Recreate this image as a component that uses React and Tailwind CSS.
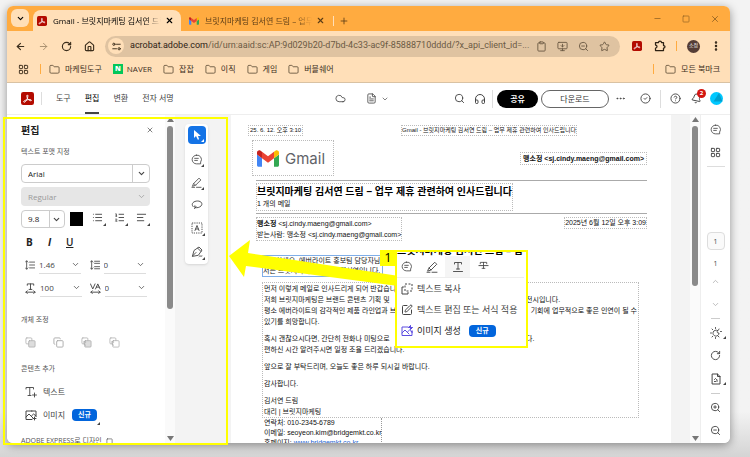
import {
  ArrowLeft, ArrowRight, Bell, ChevronDown, ChevronUp, CircleCheck, CircleHelp,
  Clipboard, Cloud, Copy, Ellipsis, EllipsisVertical, FileText, Folder,
  Headphones, House, LayoutGrid, List, ListOrdered, Minus, MonitorDown, Plus,
  RotateCw, Search, Square, SquarePen, Star, TextAlignStart, X,
  ZoomIn, ZoomOut
} from 'lucide-react'

const folders = ['잡잡', '이직', '게임', '버블쉐어']
const menus = ['도구', '편집', '변환', '전자 서명']

const Svg = ({ size = 12, sw = 1.5, className = '', children }) => (
  <svg
    width={size} height={size} viewBox="0 0 24 24" fill="none" stroke="currentColor"
    strokeWidth={sw} strokeLinecap="round" strokeLinejoin="round"
    className={`shrink-0 ${className}`} aria-hidden="true"
  >
    {children}
  </svg>
)

const AcrobatLogo = ({ size }) => (
  <svg width={size} height={size} viewBox="0 0 24 24" className="shrink-0" aria-hidden="true">
    <rect width="24" height="24" rx="4" fill="#b30b00" />
    <path
      d="M5.200 18.600c-1.400-1.200 1.500-3.300 6-4.200 4-.8 8.200-.5 8 1-.2 1.700-4.200.3-6.500-2.600C10.600 10.100 10.300 5.500 11.800 5.500s1.100 4-.8 8c-1.900 3.900-4.500 6.200-5.800 5.100z"
      fill="none" stroke="#fff" strokeWidth="1.8"
    />
  </svg>
)

const GmailMark = ({ className }) => (
  <svg viewBox="0 0 88 66" className={className} aria-hidden="true">
    <path fill="#4285f4" d="M6 66h14V32L0 17v43c0 3.300 2.700 6 6 6" />
    <path fill="#34a853" d="M68 66h14c3.300 0 6-2.700 6-6V17L68 32" />
    <path fill="#fbbc04" d="M68 6v26l20-15V9c0-7.400-8.500-11.600-14.400-7.200" />
    <path fill="#ea4335" d="M20 32V6l24 18L68 6v26L44 50" />
    <path fill="#c5221f" d="M0 9v8l20 15V6l-5.600-4.200C8.500-2.600 0 1.600 0 9" />
  </svg>
)

// Small black triangle that marks a tool with a flyout
const Corner = () => (
  <svg width="3" height="3" viewBox="0 0 3 3" className="absolute right-0 bottom-0" aria-hidden="true">
    <path d="M3 0V3H0z" fill="currentColor" />
  </svg>
)

const PuzzleIcon = () => (
  <Svg size={12} sw={2.5} className="ml-3">
    <path d="M3 5h6c0-4 6-4 6 0h4v6c4 0 4 5 0 5v5H3v-5c4 0 4-6 0-6z" />
  </Svg>
)

const CommentIcon = ({ size }) => (
  <Svg size={size} sw={1.8}>
    <path d="M12 2.500a9.500 9.500 0 1 0 0 19h9v-4a9.500 9.500 0 0 0-9-15zM8 9.500h8M8 14h6" />
  </Svg>
)

const PenIcon = ({ size }) => (
  <Svg size={size} sw={1.8}>
    <path d="M6 14 17.500 2.500l4 4L10 18l-6 2zM6 14l4 4M2 22.500h6M12 22.500h10" />
  </Svg>
)

const LassoIcon = () => (
  <Svg size={12} sw={1.8}>
    <path d="M4 15C-1 9 6 4 13 4c8 0 11 6 7 10-3 3-8 4-12 3-3-1-2-4 1-3 2 1 1 4-2 5" />
  </Svg>
)

const TextSelectIcon = () => (
  <Svg size={12} sw={1.8}>
    <rect x="2" y="2" width="20" height="20" strokeDasharray="2.500 2" strokeLinecap="butt" />
    <path d="m8 17 4-10 4 10M9.500 14h5" />
  </Svg>
)

const SignIcon = () => (
  <Svg size={12} sw={1.8}>
    <path d="M3 20 6 9l7-5 7 7-5 7zM3 20l7-7M13 4l3-2 6 6-2 3M16 21c2-3 3 1 6-1" />
  </Svg>
)

const SpacingIcon = ({ wide }) => (
  <Svg size={10} sw={2}>
    <path d="M4 2v20M1 5l3-3 3 3M1 19l3 3 3-3" />
    {wide ? <path d="M11 3h12M11 8h12M11 16h12M11 21h12" /> : <path d="M11 5h12M11 12h12M11 19h12" />}
  </Svg>
)

const ScaleIcon = () => (
  <Svg size={11} sw={2}>
    <path d="M5 5V2h14v3M12 2v12M9 14h6M2 20h20M5 17l-3 3 3 3M19 17l3 3-3 3" />
  </Svg>
)

const KerningIcon = () => (
  <Svg size={11} sw={2}>
    <path d="m1 2 5 11 5-11M12 13l5-11 5 11M14 9h6M2 20h20M5 17l-3 3 3 3M19 17l3 3-3 3" />
  </Svg>
)

const ArrangeIcon = ({ swap, fill }) => (
  <Svg size={11} sw={1.6}>
    <rect x="2" y="2" width="13" height="13" rx="2" />
    <rect x="8" y="8" width="14" height="14" rx="2" fill={fill ? '#ddd' : '#fff'} />
    {swap && <path d="M10 18c-4-1-5-4-2-8M5 11l3-2 2 3" />}
  </Svg>
)

const TextMark = ({ strike, size = 13 }) => (
  <Svg size={size} sw={1.8}>
    <path d="M5 6V3h14v3M12 3v13M9 16h6" />
    {strike ? <path d="M2 10h20" strokeWidth="2" /> : <path d="M3 21h18" />}
  </Svg>
)

const AddTextIcon = () => (
  <Svg size={12} sw={1.8}>
    <path d="M2 6V3h15v3M9.500 3v16M6 19h6M19 14v8M15 18h8" />
  </Svg>
)

const AddImageIcon = ({ spark }) => (
  <Svg size={12} sw={2}>
    <path d="M14 4H2v17h12M2 16l6-6 8 8M13 14l4-4 5 4M22 12v3" />
    <path d={spark ? 'M19 1v8M15 5h8M16.500 2.500l5 5' : 'M13 4h9v7M19 16v6M16 19h6'} />
    {spark && <path d="M14 21h8v-9" />}
  </Svg>
)

const NewBadge = ({ className = 'px-[6px]' }) => (
  <span className={`rounded-sm bg-[#0265dc] text-[7px] leading-3 font-bold text-white ${className}`}>신규</span>
)

const TabBar = () => (
  <div className="flex h-[25px] shrink-0 items-end bg-[#ffab40] pl-1 text-[8px]">
    <button aria-label="탭 검색" className="mb-1 flex size-[18px] items-center justify-center rounded-md bg-[#ffdfb8]">
      <ChevronDown size={9} strokeWidth={3} />
    </button>
    <div className="ml-1 flex h-[21px] w-[148px] items-center rounded-t-lg bg-[#ffdfb8] px-1">
      <AcrobatLogo size={10} />
      <span className="ml-[6px] w-[108px] overflow-hidden mask-r-from-85% whitespace-nowrap">Gmail - 브릿지마케팅 김서연 드림</span>
      <button aria-label="탭 닫기" className="ml-1"><X size={9} strokeWidth={3} /></button>
    </div>
    <div className="flex h-[21px] items-center pl-2 text-[#5b3d17]">
      <GmailMark className="h-2 w-[10px]" />
      <span className="ml-[6px] w-[107px] overflow-hidden mask-r-from-85% whitespace-nowrap">브릿지마케팅 김서연 드림 – 업무</span>
      <button aria-label="탭 닫기" className="ml-1"><X size={9} strokeWidth={3} /></button>
      <span className="ml-2 h-[10px] w-px bg-[#ffdfb8]" />
      <button aria-label="새 탭" className="ml-[5px]"><Plus size={10} /></button>
    </div>
    <div className="mr-[10px] ml-auto flex h-[25px] items-center gap-5 text-[#8f6022]">
      <button aria-label="최소화"><Minus size={9} /></button>
      <button aria-label="최대화"><Square size={8} /></button>
      <button aria-label="닫기"><X size={10} /></button>
    </div>
  </div>
)

const AddressBar = () => (
  <div className="flex h-[30px] shrink-0 items-center bg-[#ffdfb8] pr-2 pl-2">
    <div className="flex gap-3 text-[#3c2e1c]">
      <button aria-label="뒤로"><ArrowLeft size={11} strokeWidth={2.5} /></button>
      <button aria-label="앞으로" className="text-[#a58c6c]"><ArrowRight size={11} /></button>
      <button aria-label="새로고침"><RotateCw size={11} strokeWidth={2.5} /></button>
      <button aria-label="홈"><House size={11} strokeWidth={2.5} /></button>
    </div>
    <div className="ml-[10px] flex h-[21px] min-w-0 flex-1 items-center rounded-full bg-[#dfc3a1] pr-[10px] pl-[3px] text-[#6b5a44]">
      <span className="flex size-4 shrink-0 items-center justify-center rounded-full bg-[#ffdfb8] text-[#3c2e1c]">
        <Svg size={9} sw={2.5}>
          <circle cx="5" cy="6" r="3" /><path d="M12 6h10M2 18h10" /><circle cx="19" cy="18" r="3" />
        </Svg>
      </span>
      <a href="#url" className="ml-[6px] min-w-0 flex-1 truncate font-['Roboto',sans-serif] text-[9px]">
        <span className="text-[#2e2214]">acrobat.adobe.com</span>/id/urn:aaid:sc:AP:9d029b20-d7bd-4c33-ac9f-85888710dddd/?x_api_client_id=...
      </a>
      <div className="flex gap-[10px]">
        <Clipboard size={11} /><MonitorDown size={11} /><ZoomOut size={11} /><Star size={11} />
      </div>
    </div>
    <div className="ml-3 flex items-center text-[#2e2214]">
      <AcrobatLogo size={10} />
      <PuzzleIcon />
      <span className="ml-[10px] h-[10px] w-px bg-[#ffab40]" />
      <span className="ml-[10px] flex size-[13px] items-center justify-center rounded-full bg-[#553d36] text-[5px] text-white">소정</span>
      <button aria-label="메뉴" className="ml-[10px]"><EllipsisVertical size={12} strokeWidth={3} /></button>
    </div>
  </div>
)

const Bookmark = ({ label }) => (
  <a href="#bookmark" className="flex items-center gap-[5px]">
    <Folder size={11} strokeWidth={1.5} />{label}
  </a>
)

const Bookmarks = () => (
  <nav className="flex h-[22px] shrink-0 items-start border-b border-[#d9c2a3] bg-[#ffdfb8] pr-[10px] pl-[11px] text-[8px] text-[#3c2e1c]">
    <div className="flex h-4 w-full items-center gap-[11px]">
      <LayoutGrid size={11} />
      <span className="-mr-[3px] h-[10px] w-px bg-[#ffab40]" />
      <Bookmark label="마케팅도구" />
      <a href="#naver" className="flex items-center gap-1">
        <span className="flex size-[10px] items-center justify-center bg-[#03c75a] text-[7px] font-extrabold text-white">N</span>
        NAVER
      </a>
      {folders.map(f => <Bookmark key={f} label={f} />)}
      <span className="ml-auto h-[10px] w-px bg-[#ffab40]" />
      <Bookmark label="모든 북마크" />
    </div>
  </nav>
)

const AppHeader = () => (
  <header className="flex h-8 shrink-0 items-center border-b border-[#eee] bg-white pr-[7px] pl-[14px] text-[8px] text-[#444]">
    <AcrobatLogo size={13} />
    <span className="mx-[7px] h-[13px] w-px bg-[#ddd]" />
    <nav className="ml-[7px] flex h-full gap-[14px]">
      {menus.map(m => (
        <a
          key={m} href="#menu"
          className={`flex items-center border-b-2 whitespace-nowrap ${m === '편집' ? 'border-[#444] text-black' : 'border-transparent'}`}
        >
          {m}
        </a>
      ))}
    </nav>
    <span className="grow-5" />
    <Cloud size={11} strokeWidth={1.8} />
    <FileText size={11} strokeWidth={1.8} className="ml-5" />
    <ChevronDown size={8} className="ml-1" />
    <span className="grow-2" />
    <button aria-label="검색"><Search size={11} /></button>
    <button aria-label="도움 듣기" className="ml-[9px]"><Headphones size={12} /></button>
    <span className="mx-1 ml-[6px] h-[18px] w-px bg-[#ddd]" />
    <button className="h-[18px] w-[41px] rounded-full bg-black font-bold text-white">공유</button>
    <button className="ml-[3px] h-[18px] w-[68px] rounded-full border border-[#666] text-[#333]">다운로드</button>
    <button aria-label="더 보기" className="ml-[6px]"><Ellipsis size={11} /></button>
    <CircleCheck size={11} className="ml-[14px]" />
    <span className="ml-[9px] h-[18px] w-px bg-[#ddd]" />
    <button aria-label="도움말" className="ml-[9px]"><CircleHelp size={11} /></button>
    <button aria-label="알림" className="relative ml-[10px]">
      <Bell size={11} className="rotate-12" />
      <span className="absolute -top-1 -right-1 flex size-[9px] items-center justify-center rounded-full bg-[#d31510] text-[6px] font-bold text-white">2</span>
    </button>
    <svg width="13" height="13" viewBox="0 0 13 13" className="ml-2" aria-hidden="true">
      <circle cx="6.5" cy="6.5" r="6.5" fill="#00c8ff" />
      <path d="M3.500 9.500 9 1l3.500 8.500z" fill="#00a0cf" />
    </svg>
  </header>
)

const ValueField = ({ icon, label, value }) => (
  <div className="flex items-center gap-1">
    {icon}
    <div className="flex h-[18px] w-[42px] items-center border-b border-[#ddd]">
      <input aria-label={label} defaultValue={value} className="w-8 min-w-0 outline-none" />
      <ChevronDown size={9} className="ml-auto mr-px" />
    </div>
  </div>
)

const SectionTitle = ({ children }) => (
  <h3 className="text-[7px] leading-[10px] text-[#555]">{children}</h3>
)

const ScrollTrack = ({ thumb }) => (
  <div className="flex w-[10px] shrink-0 flex-col items-center bg-[#fafafa] py-[2px] text-[#777]">
    <svg width="7" height="5" viewBox="0 0 7 5" className="shrink-0"><path d="M3.500 0 7 5H0z" fill="currentColor" /></svg>
    <span className={`mt-1 w-[6px] rounded-full bg-[#8a8a8a] ${thumb}`} />
    <svg width="7" height="5" viewBox="0 0 7 5" className="mt-auto shrink-0"><path d="M0 0h7L3.500 5z" fill="currentColor" /></svg>
  </div>
)

const EditPanel = () => (
  <aside className="w-[158px] shrink-0 overflow-hidden bg-white pt-2 pr-[15px] pl-[14px] text-[8px] text-[#444]">
    <div className="flex items-center justify-between">
      <h2 className="text-[10px] leading-[14px] font-bold text-[#222]">편집</h2>
      <button aria-label="패널 닫기" className="-mr-1"><X size={8} /></button>
    </div>
    <div className="mt-[10px]"><SectionTitle>텍스트 포맷 지정</SectionTitle></div>
    <div className="relative mt-[7px]">
      <select aria-label="글꼴" className="h-[19px] w-full appearance-none rounded-sm border border-[#ccc] pl-[6px] text-[#222]">
        <option>Arial</option>
      </select>
      <span className="pointer-events-none absolute inset-y-0 right-0 flex w-[18px] items-center justify-center border-l border-[#ccc]">
        <ChevronDown size={9} strokeWidth={3} />
      </span>
    </div>
    <div className="relative mt-1">
      <select aria-label="글꼴 스타일" disabled className="h-[19px] w-full appearance-none rounded-sm bg-[#e6e6e6] pl-[7px] text-[#999] opacity-100">
        <option>Regular</option>
      </select>
      <span className="pointer-events-none absolute inset-y-0 right-0 flex w-[18px] items-center justify-center text-[#999]">
        <ChevronDown size={9} />
      </span>
    </div>
    <div className="mt-1 flex items-center">
      <div className="flex h-[18px] w-[46px] items-center rounded-sm border border-[#ccc]">
        <input aria-label="글꼴 크기" defaultValue="9.8" className="w-[27px] pl-[6px] text-[#222] outline-none" />
        <span className="flex h-full flex-1 items-center justify-center border-l border-[#ccc]">
          <ChevronDown size={9} strokeWidth={3} />
        </span>
      </div>
      <button aria-label="글꼴 색상" className="ml-[5px] size-[14px] bg-black" />
      <div className="ml-[9px] flex gap-2">
        <button aria-label="글머리 기호" className="relative pr-[3px] pb-[3px]"><List size={11} /><Corner /></button>
        <button aria-label="번호 목록" className="relative pr-[3px] pb-[3px]"><ListOrdered size={11} /><Corner /></button>
        <button aria-label="정렬" className="relative pr-[3px] pb-[3px]"><TextAlignStart size={11} /><Corner /></button>
      </div>
    </div>
    <div className="mt-[6px] flex h-4 items-center pl-[5px] text-[10px] font-bold text-[#222]">
      <button className="w-5 text-left">B</button>
      <button className="w-5 pl-[2px] text-left italic">I</button>
      <button className="w-5 text-left font-semibold underline">U</button>
    </div>
    <div className="mt-[6px] grid grid-cols-2 gap-x-2 gap-y-[5px] pr-1 pl-1">
      <ValueField icon={<SpacingIcon />} label="줄 간격" value="1.46" />
      <ValueField icon={<SpacingIcon wide />} label="단락 간격" value="0" />
      <ValueField icon={<ScaleIcon />} label="가로 비율" value="100" />
      <ValueField icon={<KerningIcon />} label="문자 간격" value="0" />
    </div>
    <div className="mt-[18px]"><SectionTitle>개체 조정</SectionTitle></div>
    <div className="mt-3 flex gap-[17px] pl-1 text-[#aaa]">
      <ArrangeIcon fill /><Copy size={11} /><ArrangeIcon swap fill /><ArrangeIcon swap />
    </div>
    <div className="mt-4"><SectionTitle>콘텐츠 추가</SectionTitle></div>
    <button className="mt-[10px] flex h-4 items-center gap-[6px] pl-1"><AddTextIcon />텍스트</button>
    <button className="relative mt-[7px] flex h-4 items-center pr-[2px] pl-1">
      <AddImageIcon /><span className="mr-[7px] ml-[6px]">이미지</span><NewBadge />
      <span className="absolute -right-px -bottom-[2px]"><Corner /></span>
    </button>
    <div className="mt-[13px] flex items-center gap-1 whitespace-nowrap">
      <SectionTitle>ADOBE EXPRESS로 디자인</SectionTitle>
      <Square size={7} />
    </div>
  </aside>
)

const ToolRail = () => (
  <div className="w-14 shrink-0 bg-[#f3f3f3] px-[10px] pt-[9px] text-[#444]">
    <div className="flex w-[23px] flex-col items-center gap-2 rounded bg-white pt-[2px] pb-1 shadow-sm">
      <button aria-label="선택" className="relative flex size-[18px] items-center justify-center rounded-sm bg-[#1473e6] text-white">
        <svg width="8" height="10" viewBox="0 0 8 10"><path d="M1 0v8l2-2 2 4 1-1-1-3h3z" fill="#fff" /></svg>
        <span className="absolute right-[2px] bottom-[2px]"><Corner /></span>
      </button>
      <button aria-label="댓글" className="relative p-[2px]"><CommentIcon size={11} /><Corner /></button>
      <button aria-label="그리기" className="relative p-[2px]"><PenIcon size={11} /><Corner /></button>
      <button aria-label="올가미" className="p-px"><LassoIcon /></button>
      <button aria-label="텍스트 선택" className="relative p-[2px]"><TextSelectIcon /><Corner /></button>
      <button aria-label="서명" className="relative p-[2px]"><SignIcon /><Corner /></button>
    </div>
  </div>
)

const Page = () => (
  <article className="min-w-0 flex-1 overflow-hidden bg-white pt-[10px] font-['Liberation_Sans','Noto_Sans_CJK_KR',sans-serif] text-[7px] leading-[11px] whitespace-nowrap text-[#111]">
    <div className="flex pl-[17px] text-[6px]">
      <span className="border border-dotted border-[#bbb] px-px leading-[9px]">25. 6. 12. 오후 3:10</span>
      <span className="ml-[98px] border border-dotted border-[#bbb] leading-[9px]">Gmail - 브릿지마케팅 김서연 드림 – 업무 제휴 관련하여 인사드립니다</span>
    </div>
    <div className="mt-1 flex items-center justify-between pr-6 pl-[21px]">
      <div className="flex h-9 w-[82px] items-center gap-[6px] border border-dotted border-[#bbb] pl-1">
        <GmailMark className="h-[17px] w-[22px]" />
        <span className="font-['Inter',sans-serif] text-[15px] text-[#5f6368]">Gmail</span>
      </div>
      <b className="border border-dotted border-[#bbb] px-[2px]">맹소정 &lt;sj.cindy.maeng@gmail.com&gt;</b>
    </div>
    <div className="mr-6 ml-[25px]">
      <hr className="mt-1 border-[#aaa]" />
      <div className="mt-[2px] w-fit border border-dotted border-[#bbb] pb-px">
        <h1 className="text-[10px] leading-[15px] font-bold text-black">브릿지마케팅 김서연 드림 – 업무 제휴 관련하여 인사드립니다</h1>
        <p className="leading-[10px]">1 개의 메일</p>
      </div>
      <hr className="mt-[2px] border-[#aaa]" />
      <div className="mt-[3px] flex items-start justify-between">
        <div className="border border-dotted border-[#bbb]">
          <p><b>맹소정</b> &lt;sj.cindy.maeng@gmail.com&gt;</p>
          <p>받는사람: 맹소정 &lt;sj.cindy.maeng@gmail.com&gt;</p>
        </div>
        <p className="border border-dotted border-[#bbb] leading-[10px]">2025년 6월 12일 오후 3:09</p>
      </div>
    </div>
    <div className="mt-[14px] ml-[31px] w-fit border border-[#7faee8] bg-white leading-[10px]">
      <p>안녕하세요, 에버라이트 홍보팀 담당자님,</p>
      <p>저는 브릿지마케팅의 대리 <mark className="bg-[#b9d5f5] text-inherit">김</mark>서연입니다.</p>
    </div>
    <div className="mt-[5px] mr-8 ml-[31px] border border-dotted border-[#bbb] px-px">
      <p>먼저 이렇게 메일로 인사드리게 되어 반갑습니다.</p>
      <div className="flex">
        <p className="w-[262px]">저희 브릿지마케팅은 브랜드 콘텐츠 기획 및</p><p>전시입니다.</p>
      </div>
      <div className="flex justify-between">
        <p>평소 에버라이트의 감각적인 제품 라인업과 브랜드</p><p>기회에 업무적으로 좋은 인연이 될 수</p>
      </div>
      <p>있기를 희망합니다.</p>
      <div className="mt-[6px] flex">
        <p className="w-[262px]">혹시 괜찮으시다면, 간단히 전화나 미팅으로</p><p>다.</p>
      </div>
      <p>편하신 시간 알려주시면 일정 조율 드리겠습니다.</p>
      <p className="mt-[6px]">앞으로 잘 부탁드리며, 오늘도 좋은 하루 되시길 바랍니다.</p>
      <p className="mt-[6px]">감사합니다.</p>
      <p className="mt-[6px]">김서연 드림</p>
      <p>대리 | 브릿지마케팅</p>
    </div>
    <div className="ml-[31px] w-fit border-r border-dotted border-[#999] pl-[2px] leading-[10px]">
      <p>연락처: 010-2345-6789</p>
      <p>이메일: seoyeon.kim@bridgemkt.co.kr</p>
      <p>홈페이지: <a href="#home" className="text-[#1a5fd0] underline">www.bridgemkt.co.kr</a></p>
    </div>
  </article>
)

const RightRail = () => (
  <div className="flex w-[30px] shrink-0 flex-col items-center border-l border-[#eee] bg-white pt-[9px] text-[7px] text-[#444]">
    <button aria-label="댓글"><CommentIcon size={11} /></button>
    <button aria-label="페이지 축소판" className="mt-3"><LayoutGrid size={11} /></button>
    <hr className="mt-2 w-[18px] border-[#ddd]" />
    <input aria-label="페이지" defaultValue="1" className="mt-[65px] h-[18px] w-[18px] rounded-sm border border-[#ddd] bg-[#fafafa] text-center" />
    <span className="mt-[9px] leading-[10px]">1</span>
    <button aria-label="이전 페이지" className="mt-2 text-[#aaa]"><ChevronUp size={9} /></button>
    <button aria-label="다음 페이지" className="mt-[14px] text-[#aaa]"><ChevronDown size={9} /></button>
    <hr className="mt-[9px] w-[9px] border-[#ccc]" />
    <button aria-label="화면 설정" className="relative mt-2 px-1">
      <Svg size={12} sw={1.8}>
        <path d="M15 7a6 6 0 1 0 3 5c-3 1-5-2-3-5zM11 1v2M4 4l1.500 1.500M1 12h2M4 20l1.500-1.500M11 21v2M18 20l-1.500-1.500M18 4l-1 2M21 9h2" />
      </Svg>
      <Corner />
    </button>
    <button aria-label="회전" className="mt-[11px]"><RotateCw size={11} /></button>
    <button aria-label="내보내기" className="relative mt-3 px-1">
      <Svg size={12} sw={2}><path d="M5 2h10l5 5v15H5zM15 2v5h5M9 17h2M14 17v-3M9 13l2-2 2 2" /></Svg>
      <Corner />
    </button>
    <hr className="mt-2 w-[9px] border-[#ccc]" />
    <button aria-label="확대" className="mt-2"><ZoomIn size={11} /></button>
    <button aria-label="축소" className="mt-3"><ZoomOut size={11} /></button>
  </div>
)

const ContextMenu = () => (
  <div className="absolute top-[250px] left-[395px] w-[133px] border-2 border-[#ffff00] bg-white pb-1 text-[9px] text-[#444]">
    <div className="flex h-1 items-end overflow-hidden text-[10px] leading-[12px] font-bold whitespace-nowrap text-black">
      브릿지마케팅 김서연 드림 – 업무
    </div>
    <div className="mr-[2px] flex h-[22px] items-stretch border-b border-[#eee]">
      <button aria-label="댓글" className="flex w-[18px] items-center justify-center"><CommentIcon size={11} /></button>
      <button aria-label="강조" className="ml-2 flex w-[18px] items-center justify-center"><PenIcon size={12} /></button>
      <button aria-label="밑줄" className="ml-1 flex w-[25px] items-center justify-center bg-[#f5f5f5]"><TextMark size={12} /></button>
      <button aria-label="취소선" className="flex w-[26px] items-center justify-center"><TextMark size={11} strike /></button>
    </div>
    <button className="flex h-[21px] items-center gap-1 pl-1">
      <Svg size={12} sw={2}>
        <rect x="8" y="2" width="14" height="14" strokeDasharray="4 3" strokeLinecap="butt" /><path d="M5 8H2v14h12v-3" />
      </Svg>
      텍스트 복사
    </button>
    <button className="flex h-[21px] items-center gap-1 pl-1 whitespace-nowrap"><SquarePen size={12} />텍스트 편집 또는 서식 적용</button>
    <button className="flex h-[22px] items-center gap-1 pl-1 text-[#222]">
      <span className="text-[#5c4de0]"><AddImageIcon spark /></span>
      <span className="mr-1">이미지 생성</span><NewBadge className="px-[7px]" />
    </button>
  </div>
)

export default function App() {
  return (
    <div className="relative h-screen overflow-hidden bg-linear-to-b from-[#f3f3f3] from-90% to-[#d4d4d4] pt-[6px] pr-5 pb-[14px] pl-[7px] font-['Open_Sans','Noto_Sans_CJK_KR',sans-serif]">
      <div className="flex h-full flex-col overflow-hidden rounded-md bg-white shadow-[0_2px_10px_rgba(0,0,0,0.4)]">
        <TabBar />
        <AddressBar />
        <Bookmarks />
        <AppHeader />
        <main className="flex min-h-0 flex-1">
          <EditPanel />
          <ScrollTrack thumb="h-[183px]" />
          <ToolRail />
          <Page />
          <div className="w-[19px] shrink-0 bg-[#f3f3f3]" />
          <ScrollTrack thumb="h-[160px]" />
          <RightRail />
        </main>
      </div>

      {/* Step highlight: editing panel, arrow, context menu */}
      <div className="pointer-events-none absolute top-[117px] left-[3px] h-[328px] w-[225px] border-2 border-[#ffff00]" />
      <svg width="172" height="50" viewBox="0 0 172 50" className="absolute top-[238px] left-[228px]" aria-hidden="true">
        <path d="M1 18 22 2 20 15 171 38 170 48 18 28 16 39z" fill="#ff0" />
      </svg>
      <ContextMenu />
      <span className="absolute top-[250px] left-[380px] flex h-4 w-4 items-center justify-center bg-[#ffff00] text-[13px]">1</span>
    </div>
  )
}
